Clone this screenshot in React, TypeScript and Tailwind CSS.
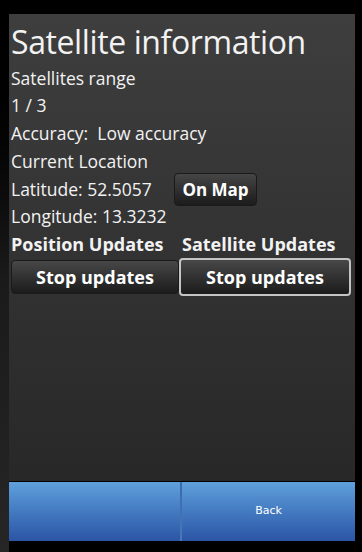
import React from "react";

const font = { fontFamily: '"Open Sans", "Noto Sans", sans-serif' };

function DarkButton({ label, focused }: { label: string; focused?: boolean }) {
  return (
    <div
      className={`flex items-center justify-center rounded-[4px] bg-gradient-to-b from-[#484848] to-[#1c1c1c] text-[18px] font-bold text-white ${
        focused ? "h-[38px] border-2 border-[#c4c4c4]" : "h-[34px] border border-[#1a1a1a]"
      }`}
    >
      {label}
    </div>
  );
}

export default function App() {
  return (
    <div className="flex h-[552px] w-[362px] bg-black" style={font}>
      {/* shadow strip on the left */}
      <div className="w-[9px] bg-gradient-to-b from-black via-[#1a1a1a] to-[#262626]" />

      <div className="flex w-[346px] flex-col">
        <div className="h-[14px] bg-black" />

        <div className="flex flex-1 flex-col bg-gradient-to-b from-[#3e3e3e] to-[#282828] pl-[2px] text-[#f2f2f2]">
          <div className="mt-[9.5px] text-[32px] leading-[36px] tracking-[-0.4px]">Satellite information</div>
          <div className="mt-[5px] text-[17.5px] leading-[27.8px]">Satellites range</div>
          <div className="text-[17.5px] leading-[27.8px]">1 / 3</div>
          <div className="text-[17.5px] leading-[27.8px]">Accuracy:&nbsp; Low accuracy</div>
          <div className="text-[17.5px] leading-[27.8px]">Current Location</div>
          <div className="flex h-[27.8px] items-center text-[17.5px] leading-[27.8px]">
            <span className="w-[163px] shrink-0">Latitude: 52.5057</span>
            <div className="flex h-[33px] w-[83px] shrink-0 items-center justify-center rounded-[4px] border border-[#1a1a1a] bg-gradient-to-b from-[#464646] to-[#1c1c1c] text-[17px] font-bold text-white">
              On Map
            </div>
          </div>
          <div className="text-[17.5px] leading-[27.8px]">Longitude: 13.3232</div>
          <div className="flex text-[18px] font-bold leading-[27.8px]">
            <span className="w-[171px]">Position Updates</span>
            <span>Satellite Updates</span>
          </div>
          <div className="mt-[-1px] grid grid-cols-[168px_172px] items-center">
            <DarkButton label="Stop updates" />
            <DarkButton label="Stop updates" focused />
          </div>
        </div>

        <div className="flex h-[60px] border-t border-black">
          <div className="flex-1 bg-gradient-to-b from-[#5fa0dc] to-[#2b55a5]" />
          <div className="w-[2px] bg-gradient-to-b from-[#3a6aae] to-[#4a78b8]" />
          <div
            className="flex w-[173px] items-center justify-center bg-gradient-to-b from-[#5fa0dc] to-[#2b55a5] text-[11px] text-white"
            style={{ fontFamily: '"DejaVu Sans", sans-serif' }}
          >
            Back
          </div>
        </div>

        <div className="h-[11px] flex-none bg-black" />
      </div>

      <div className="w-[7px] bg-black" />
    </div>
  );
}
